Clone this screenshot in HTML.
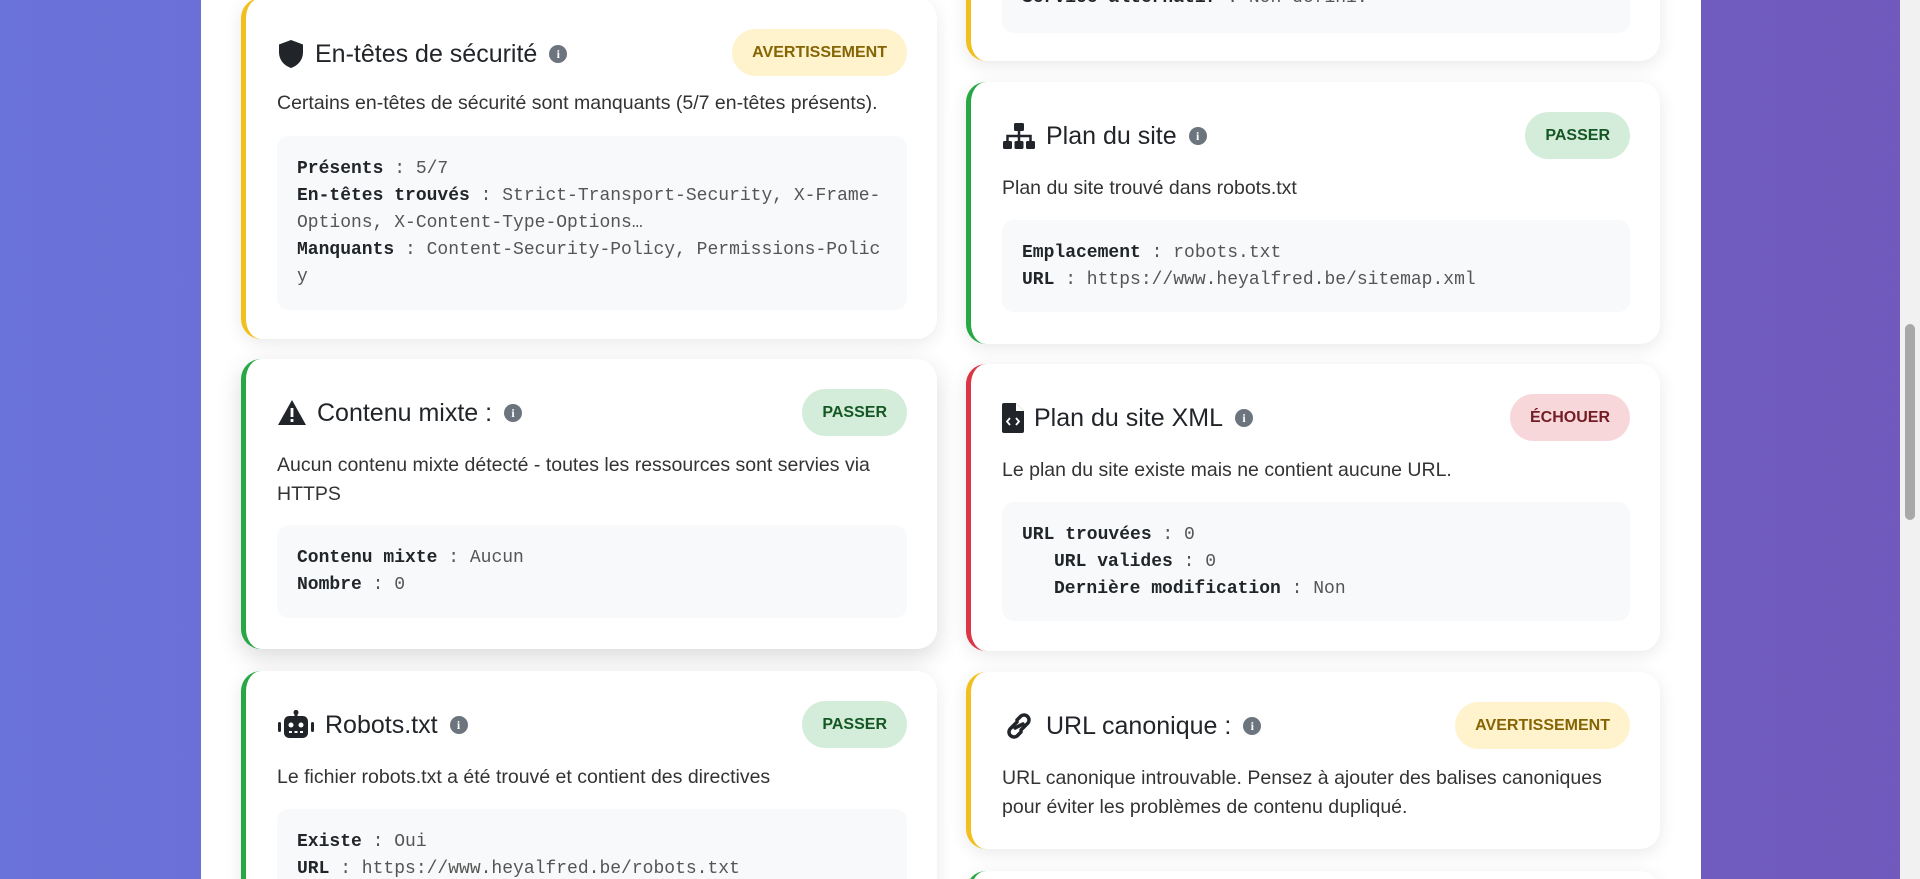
<!DOCTYPE html>
<html><head><meta charset="utf-8"><style>
*{box-sizing:border-box;margin:0;padding:0}
html,body{width:1920px;height:879px;overflow:hidden}
body{background:linear-gradient(90deg,#6a73da 0%,#7059bb 100%);font-family:"Liberation Sans",sans-serif;position:relative;color:#212529}
.wrap{position:absolute;left:201px;top:0;width:1500px;height:879px;background:#fff}
.sb{position:absolute;right:0;top:0;width:20px;height:879px;background:#f1f1f1}
.sb .th{position:absolute;left:5px;top:324px;width:10px;height:196px;background:#a8a8a8;border-radius:5px}
.card{position:absolute;background:#fff;border-radius:20px;box-shadow:0 4px 18px rgba(0,0,0,.09);border-left:5px solid}
.y{border-left-color:#f2c01e}.g{border-left-color:#28a745}.r{border-left-color:#dc3545}
.tt{position:absolute;left:31px;top:38px;height:32px;display:flex;align-items:center;font-size:25px;color:#212529}
.tt svg.ic{margin-right:10px}
.info{display:inline-block;width:18px;height:18px;border-radius:50%;background:#6c757d;color:#fff;font-size:12px;font-weight:bold;text-align:center;line-height:18px;margin-left:12px;font-family:"Liberation Serif",serif}
.badge{position:absolute;right:30px;top:30px;height:47px;padding:0 20px;border-radius:24px;font-size:16px;font-weight:bold;line-height:47px}
.bw{background:#fff3cd;color:#856404}.bp{background:#d4edda;color:#155724}.bf{background:#f8d7da;color:#721c24}
.desc{position:absolute;left:31px;right:30px;top:92px;font-size:19.5px;line-height:29px;color:#333}
.code{position:absolute;left:31px;right:30px;background:#f8f9fa;border-radius:12px;padding:20px 20px;font-family:"Liberation Mono",monospace;font-size:18px;line-height:27px;color:#555}
.code b{color:#212529}
.ind{padding-left:32px}
</style></head><body>
<div class="wrap"></div>
<div class="sb"><div class="th"></div></div>

<div class="card y" style="left:241px;top:-2px;width:696px;height:341px">
  <div class="tt" style="top:40px"><svg class="ic" width="28" height="30" viewBox="0 0 28 30"><path d="M14 1L26 5.5V13c0 8-5 13.5-12 16C7 26.5 2 21 2 13V5.5Z" fill="#212529"/></svg>En-têtes de sécurité<span class="info">i</span></div>
  <div class="badge bw" style="top:31px">AVERTISSEMENT</div>
  <div class="desc" style="top:91px">Certains en-têtes de sécurité sont manquants (5/7 en-têtes présents).</div>
  <div class="code" style="top:138px;height:174px"><b>Présents</b> : 5/7<br><b>En-têtes trouvés</b> : Strict-Transport-Security, X-Frame-<br>Options, X-Content-Type-Options…<br><b>Manquants</b> : Content-Security-Policy, Permissions-Polic<br>y</div>
</div>

<div class="card g" style="left:241px;top:359px;width:696px;height:290px;box-shadow:0 8px 24px rgba(0,0,0,.15)">
  <div class="tt"><svg class="ic" width="30" height="28" viewBox="0 0 30 28"><path d="M15 1L29 26H1Z" fill="#212529"/><rect x="13.6" y="9" width="2.8" height="9" fill="#fff"/><rect x="13.6" y="20" width="2.8" height="3" fill="#fff"/></svg>Contenu mixte :<span class="info">i</span></div>
  <div class="badge bp">PASSER</div>
  <div class="desc">Aucun contenu mixte détecté - toutes les ressources sont servies via HTTPS</div>
  <div class="code" style="top:166px;height:93px"><b>Contenu mixte</b> : Aucun<br><b>Nombre</b> : 0</div>
</div>

<div class="card g" style="left:241px;top:671px;width:696px;height:260px">
  <div class="tt"><svg class="ic" width="38" height="30" viewBox="0 0 38 30"><rect x="17.5" y="0" width="3" height="6" fill="#212529"/><circle cx="19" cy="2.5" r="2.5" fill="#212529"/><rect x="7" y="6" width="24" height="22" rx="5" fill="#212529"/><rect x="1" y="12" width="3" height="10" rx="1.5" fill="#212529"/><rect x="34" y="12" width="3" height="10" rx="1.5" fill="#212529"/><circle cx="14" cy="15" r="2.5" fill="#fff"/><circle cx="24" cy="15" r="2.5" fill="#fff"/><rect x="12" y="21" width="3" height="2" fill="#fff"/><rect x="17.5" y="21" width="3" height="2" fill="#fff"/><rect x="23" y="21" width="3" height="2" fill="#fff"/></svg>Robots.txt<span class="info">i</span></div>
  <div class="badge bp">PASSER</div>
  <div class="desc">Le fichier robots.txt a été trouvé et contient des directives</div>
  <div class="code" style="top:138px;height:120px"><b>Existe</b> : Oui<br><b>URL</b> : https://www.heyalfred.be/robots.txt</div>
</div>

<div class="card y" style="left:966px;top:-60px;width:694px;height:121px">
  <div class="code" style="top:0;height:93px;padding-top:45px"><b>Service alternatif</b> : Non défini.</div>
</div>

<div class="card g" style="left:966px;top:82px;width:694px;height:262px">
  <div class="tt"><svg class="ic" width="34" height="28" viewBox="0 0 34 28"><rect x="12" y="1" width="10" height="8" rx="1.5" fill="#212529"/><rect x="1" y="19" width="9" height="8" rx="1.5" fill="#212529"/><rect x="12.5" y="19" width="9" height="8" rx="1.5" fill="#212529"/><rect x="24" y="19" width="9" height="8" rx="1.5" fill="#212529"/><path d="M17 9v5M5.5 19v-5h23v5M17 14v5" stroke="#212529" stroke-width="2.5" fill="none"/></svg>Plan du site<span class="info">i</span></div>
  <div class="badge bp">PASSER</div>
  <div class="desc">Plan du site trouvé dans robots.txt</div>
  <div class="code" style="top:138px;height:92px"><b>Emplacement</b> : robots.txt<br><b>URL</b> : https://www.heyalfred.be/sitemap.xml</div>
</div>

<div class="card r" style="left:966px;top:364px;width:694px;height:287px">
  <div class="tt"><svg class="ic" width="22" height="30" viewBox="0 0 22 30"><path d="M2 0h12l8 8v20a2 2 0 0 1-2 2H2a2 2 0 0 1-2-2V2a2 2 0 0 1 2-2Z" fill="#212529"/><path d="M14 0v8h8" fill="#fff"/><path d="M8 15l-3 3.5 3 3.5M14 15l3 3.5-3 3.5" stroke="#fff" stroke-width="1.8" fill="none"/></svg>Plan du site XML<span class="info">i</span></div>
  <div class="badge bf">ÉCHOUER</div>
  <div class="desc">Le plan du site existe mais ne contient aucune URL.</div>
  <div class="code" style="top:138px;height:119px"><b>URL trouvées</b> : 0<br><div class="ind"><b>URL valides</b> : 0<br><b>Dernière modification</b> : Non</div></div>
</div>

<div class="card y" style="left:966px;top:672px;width:694px;height:177px">
  <div class="tt"><svg class="ic" width="34" height="30" viewBox="0 0 34 30"><g fill="none" stroke="#212529" stroke-width="3.5" stroke-linecap="round"><path d="M15 11l-7 7a5 5 0 0 0 7 7l4-4"/><path d="M19 19l7-7a5 5 0 0 0-7-7l-4 4"/><path d="M13 17l8-4"/></g></svg>URL canonique :<span class="info">i</span></div>
  <div class="badge bw">AVERTISSEMENT</div>
  <div class="desc">URL canonique introuvable. Pensez à ajouter des balises canoniques pour éviter les problèmes de contenu dupliqué.</div>
</div>

<div class="card g" style="left:966px;top:871px;width:694px;height:100px"></div>
</body></html>
